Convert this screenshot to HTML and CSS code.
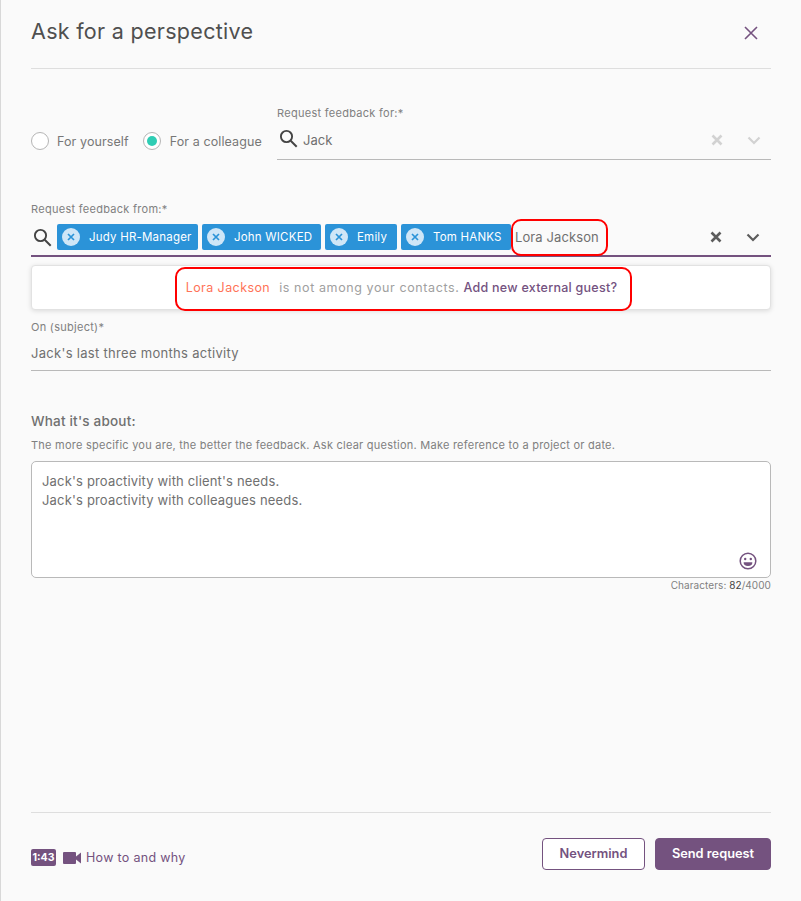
FILE: index.html
```html
<!DOCTYPE html>
<html lang="en">
<head>
<meta charset="utf-8">
<title>Ask for a perspective</title>
<link rel="stylesheet" href="styles.css">
</head>
<body>
<main class="panel">
  <header class="head">
    <h1 class="title">Ask for a perspective</h1>
    <svg class="close" width="14" height="14" viewBox="0 0 14 14"><path d="M1 1l12 12M13 1L1 13" stroke="#74527f" stroke-width="1.6" fill="none"/></svg>
  </header>

  <section class="target">
    <div class="radios">
      <span class="radio"></span><span class="radio-label">For yourself</span>
      <span class="radio on"><span class="dot"></span></span><span class="radio-label">For a colleague</span>
    </div>
    <div class="for">
      <div class="label">Request feedback for:*</div>
      <div class="field for-field">
        <svg class="search" width="19" height="19" viewBox="0 0 19 19"><circle cx="7.5" cy="7.5" r="5.6" stroke="#444" stroke-width="1.9" fill="none"/><path d="M11.7 11.7l6 6" stroke="#444" stroke-width="2" fill="none"/></svg>
        <span class="value">Jack</span>
        <svg class="x-ico" width="12" height="12" viewBox="0 0 12 12"><path d="M1.5 1.5l9 9M10.5 1.5l-9 9" stroke="#d2d2d2" stroke-width="2.6" fill="none"/></svg>
        <svg class="chev" width="14" height="9" viewBox="0 0 14 9"><path d="M1.5 1.5L7 7l5.5-5.5" stroke="#d2d2d2" stroke-width="2.2" fill="none"/></svg>
      </div>
    </div>
  </section>

  <section class="from">
    <div class="label">Request feedback from:*</div>
    <div class="field from-field">
      <svg class="search" width="19" height="19" viewBox="0 0 19 19"><circle cx="7.5" cy="7.5" r="5.6" stroke="#444" stroke-width="1.9" fill="none"/><path d="M11.7 11.7l6 6" stroke="#444" stroke-width="2" fill="none"/></svg>
      <span class="chip chip-judy"><span class="chip-x"><svg width="8" height="8" viewBox="0 0 8 8"><path d="M1 1l6 6M7 1L1 7" stroke="#2b93d8" stroke-width="1.7" fill="none"/></svg></span>Judy HR-Manager</span>
      <span class="chip chip-john"><span class="chip-x"><svg width="8" height="8" viewBox="0 0 8 8"><path d="M1 1l6 6M7 1L1 7" stroke="#2b93d8" stroke-width="1.7" fill="none"/></svg></span>John WICKED</span>
      <span class="chip chip-emily"><span class="chip-x"><svg width="8" height="8" viewBox="0 0 8 8"><path d="M1 1l6 6M7 1L1 7" stroke="#2b93d8" stroke-width="1.7" fill="none"/></svg></span>Emily</span>
      <span class="chip chip-tom"><span class="chip-x"><svg width="8" height="8" viewBox="0 0 8 8"><path d="M1 1l6 6M7 1L1 7" stroke="#2b93d8" stroke-width="1.7" fill="none"/></svg></span>Tom HANKS</span>
      <span class="typed">Lora Jackson<span class="ring ring-input"></span></span>
      <svg class="x-ico" width="12" height="12" viewBox="0 0 12 12"><path d="M1.5 1.5l9 9M10.5 1.5l-9 9" stroke="#5c5c5c" stroke-width="2.6" fill="none"/></svg>
      <svg class="chev" width="14" height="9" viewBox="0 0 14 9"><path d="M1.5 1.5L7 7l5.5-5.5" stroke="#5c5c5c" stroke-width="2.2" fill="none"/></svg>
    </div>
    <div class="notice">
      <span class="notice-text"><span class="ring ring-notice"></span><span class="name">Lora Jackson</span><span class="muted">is not among your contacts.</span><a class="add">Add new external guest?</a></span>
    </div>
  </section>

  <section class="subject">
    <div class="label">On (subject)*</div>
    <div class="field subject-field"><span class="value">Jack's last three months activity</span></div>
  </section>

  <section class="about">
    <h2 class="about-title">What it's about:</h2>
    <p class="hint">The more specific you are, the better the feedback. Ask clear question. Make reference to a project or date.</p>
    <div class="area">
      <div>Jack's proactivity with client's needs.</div>
      <div>Jack's proactivity with colleagues needs.</div>
      <svg class="smile" width="18" height="18" viewBox="0 0 18 18"><circle cx="9" cy="9" r="7.8" stroke="#74527f" stroke-width="1.5" fill="none"/><circle cx="6.2" cy="7" r="1.2" fill="#74527f"/><circle cx="11.8" cy="7" r="1.2" fill="#74527f"/><path d="M4.6 10.2h8.8a4.4 3.8 0 0 1-8.8 0z" fill="#74527f"/></svg>
    </div>
    <div class="count">Characters: <span class="count-num">82</span>/4000</div>
  </section>

  <footer class="foot">
    <a class="how">
      <span class="time">1:43</span>
      <svg class="cam" width="18" height="12" viewBox="0 0 18 12"><rect width="13" height="12" rx="1" fill="#74527f"/><path d="M13 4.5L18 0.5V11.5L13 7.5z" fill="#74527f"/></svg>
      <span>How to and why</span>
    </a>
    <div class="btns">
      <button class="btn ghost">Nevermind</button>
      <button class="btn solid">Send request</button>
    </div>
  </footer>
</main>
</body>
</html>
```

FILE: styles.css
```css
* { box-sizing: border-box; }
html, body { margin: 0; height: 100%; }
body {
  background: #fafafa;
  font-family: "Inter", "Noto Sans", sans-serif;
  color: #707070;
  overflow: hidden;
}
.panel {
  height: 901px;
  border-left: 1px solid #d8d8d8;
  padding: 0 30px;
  display: flex;
  flex-direction: column;
}
.head {
  height: 69px;
  flex: none;
  border-bottom: 1px solid #dedede;
  display: flex;
  justify-content: space-between;
  padding-top: 17px;
}
.title { margin: 0; font-size: 21.5px; line-height: 28px; font-weight: 400; color: #4f4f4f; letter-spacing: .3px; }
.close { margin: 9px 13px 0 0; }

.target { display: flex; align-items: flex-end; margin-top: 37px; }
.radios { display: flex; align-items: center; height: 36px; font-size: 12.5px; letter-spacing: .1px; color: #777; margin-bottom: 1px; width: 246px; flex: none; }
.radio { width: 18px; height: 18px; border: 1px solid #b5b5b5; border-radius: 50%; background: #fff; display: flex; align-items: center; justify-content: center; flex: none; }
.dot { width: 10px; height: 10px; border-radius: 50%; background: #2fcdb4; }
.radio-label { margin: 0 14px 0 8px; white-space: nowrap; }
.radio-label:nth-child(4) { margin-left: 9px; }
.for { flex: 1; }
.label { font-size: 11px; line-height: 14px; color: #808080; letter-spacing: .28px; }
.field { display: flex; align-items: center; }
.for-field { height: 39px; border-bottom: 1px solid #b9b9b9; padding: 0 10px 0 2px; margin-top: 1px; }
.for-field .search { margin-bottom: 3px; }
.value { font-size: 13px; color: #707070; }
.for-field .value { margin-left: 5px; flex: 1; }
.x-ico { flex: none; }
.chev { flex: none; margin-left: 24px; }

.from { margin-top: 42px; position: relative; }
.from-field { height: 40px; border-bottom: 2px solid #74527f; padding: 2px 11px 0 2px; margin-top: 1px; }
.from-field .search { margin-right: 5px; }
.from-field .x-ico { margin-left: 0; }
.chip {
  height: 26px;
  background: #2b93d8;
  color: #fff;
  font-size: 11.5px;
  letter-spacing: .2px;
  border-radius: 2px;
  display: flex;
  align-items: center;
  padding-left: 5px;
  margin-right: 4px;
  flex: none;
  white-space: nowrap;
}
.chip-judy { width: 141px; }
.chip-john { width: 119px; }
.chip-emily { width: 72px; }
.chip-tom { width: 110px; margin-right: 0; }
.chip-x { width: 18px; height: 18px; border-radius: 50%; background: #cfe6f7; display: flex; align-items: center; justify-content: center; margin-right: 9px; flex: none; }
.typed { position: relative; font-size: 13px; color: #707070; margin-left: 4px; flex: 1; letter-spacing: .1px; }
.ring { position: absolute; border: 2px solid #f00; pointer-events: none; }
.ring-input { left: -4px; top: -10px; width: 97px; height: 37px; border-radius: 10px; }
.notice { margin-top: 8px; height: 45px; background: #fff; border: 1px solid #e2e2e2; border-radius: 4px; box-shadow: 0 1px 5px rgba(0,0,0,.13); display: flex; justify-content: center; align-items: center; font-size: 12.5px; padding-left: 1px; }
.notice-text { position: relative; display: flex; align-items: center; white-space: nowrap; margin-bottom: 1px; }
.ring-notice { left: -11px; top: -13px; right: -15px; bottom: -16px; border-radius: 10px; }
.name { color: #ff7358; margin-right: 9px; letter-spacing: .42px; }
.muted { color: #a0a0a0; margin-right: 4px; letter-spacing: .6px; }
.add { color: #74527f; font-weight: 500; letter-spacing: .26px; }

.subject { margin-top: 10px; }
.subject-field { height: 36px; border-bottom: 1px solid #b9b9b9; margin-top: 1px; }
.subject-field .value { letter-spacing: .3px; }
.about { margin-top: 41px; }
.about-title { margin: 0; font-size: 13.5px; line-height: 18px; font-weight: 500; color: #707070; letter-spacing: .2px; }
.hint { margin: 8px 0 0; font-size: 11px; line-height: 14px; color: #808080; letter-spacing: .24px; }
.area { position: relative; height: 117px; margin-top: 9px; background: #fff; border: 1px solid #b9b9b9; border-radius: 5px; padding: 10px; font-size: 13px; line-height: 19px; color: #707070; letter-spacing: .17px; }
.smile { position: absolute; right: 13px; bottom: 7px; }
.count { font-size: 10px; line-height: 14px; text-align: right; color: #808080; margin-top: 0; letter-spacing: .07px; }
.count-num { color: #444; }

.foot { margin-top: auto; height: 89px; flex: none; border-top: 1px solid #dedede; display: flex; justify-content: space-between; align-items: flex-start; padding-top: 25px; }
.how { display: flex; align-items: center; font-size: 12.5px; color: #74527f; margin-top: 11px; letter-spacing: .3px; }
.time { background: #74527f; color: #fff; font-size: 10.5px; font-weight: 700; letter-spacing: 0; border-radius: 2px; width: 25px; height: 17px; display: flex; align-items: center; justify-content: center; margin-right: 7px; }
.cam { margin-right: 5px; }
.btns { display: flex; gap: 10px; }
.btn { height: 32px; border-radius: 4px; font-family: inherit; font-size: 12.8px; font-weight: 600; padding: 0 0 2px; }
.ghost { width: 103px; background: #fff; border: 1px solid #74527f; color: #74527f; }
.solid { width: 116px; background: #74527f; border: 1px solid #74527f; color: #fff; }
```
